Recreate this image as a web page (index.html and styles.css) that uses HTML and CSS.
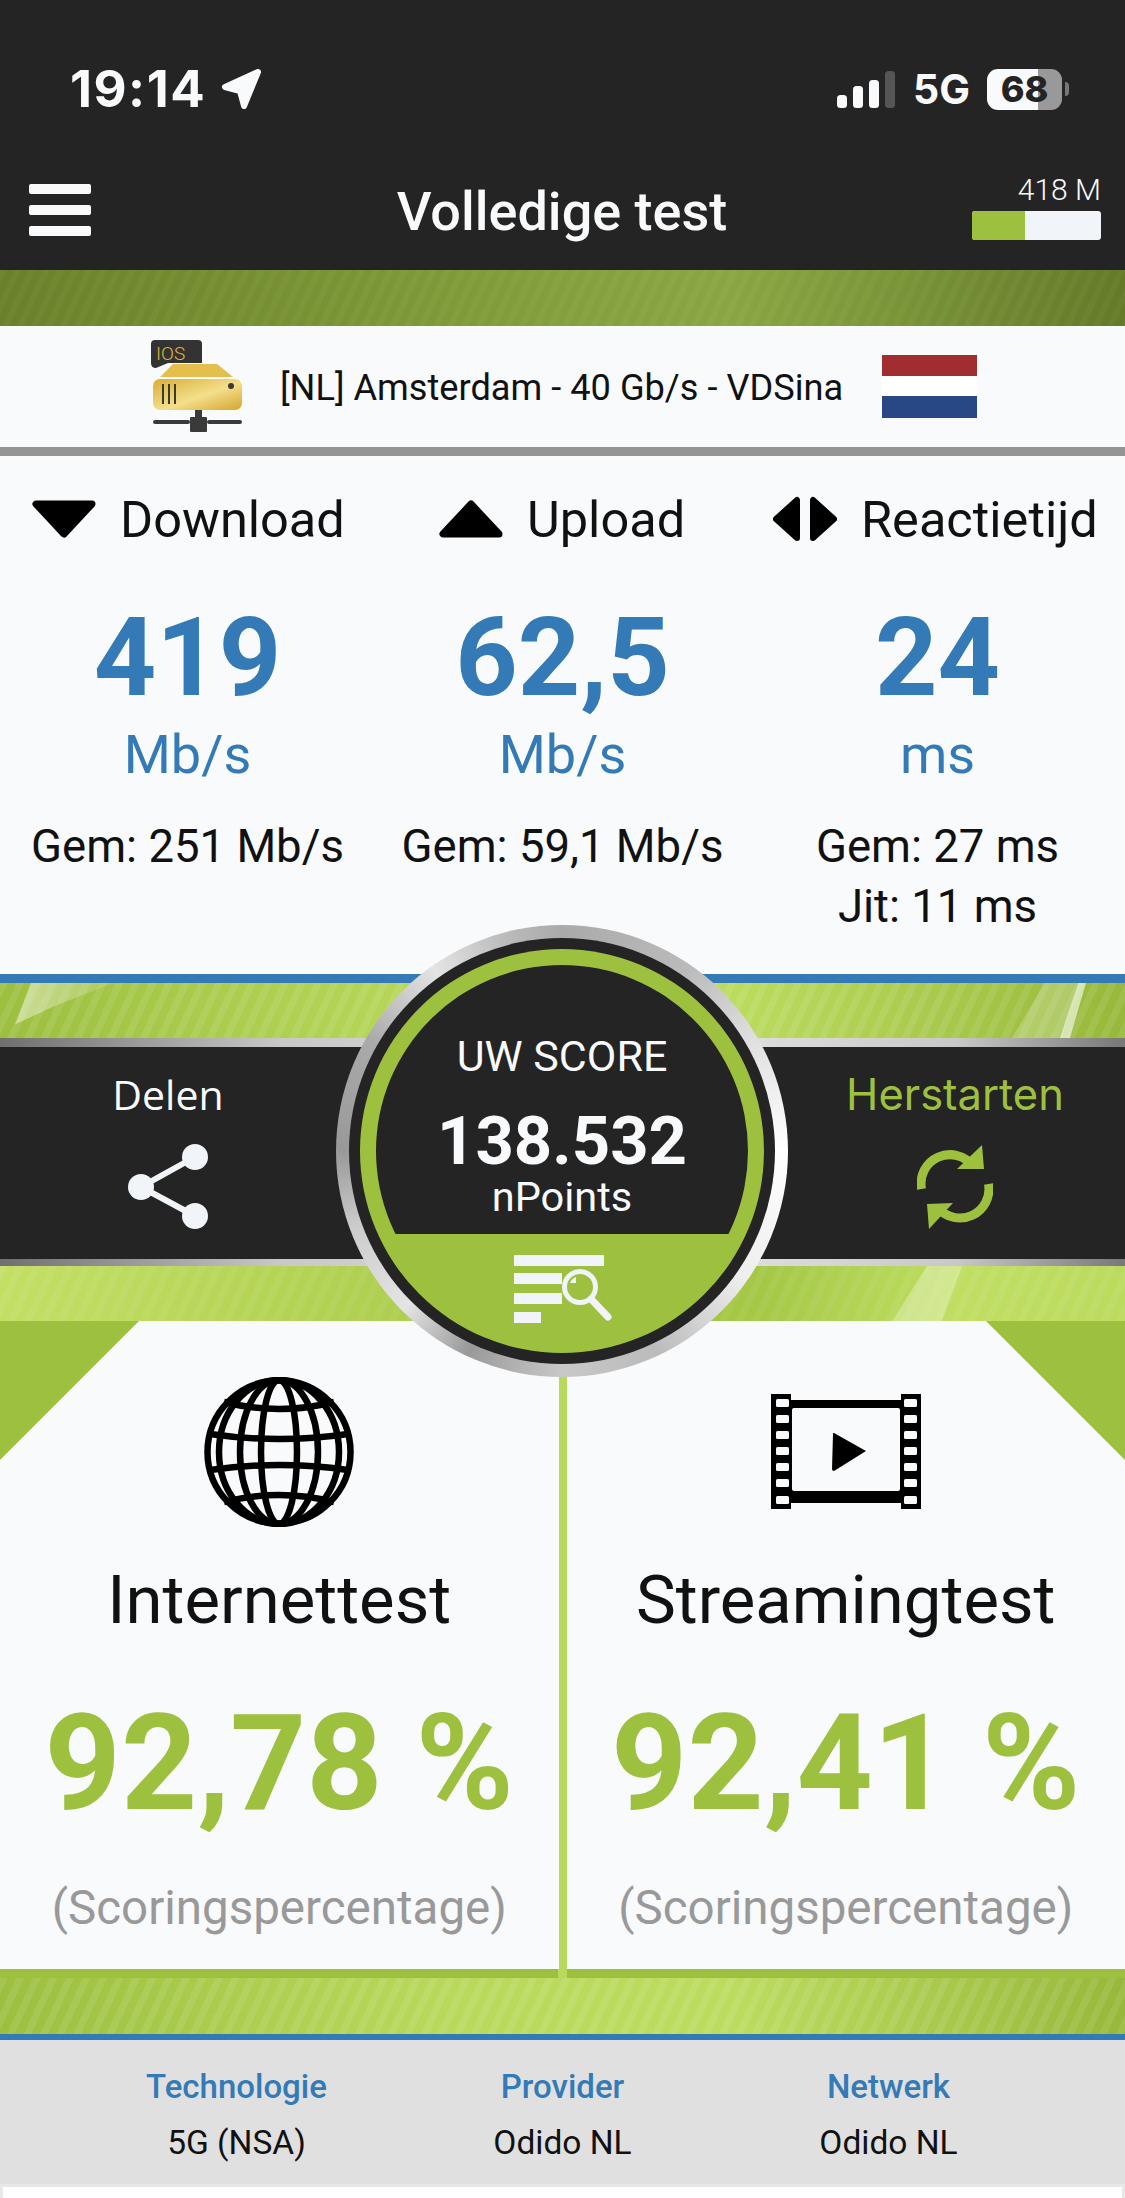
FILE: index.html
```html
<!DOCTYPE html>
<html lang="nl">
<head>
<meta charset="utf-8">
<title>Volledige test</title>
<link rel="stylesheet" href="styles.css">
</head>
<body>
<div class="page">
  <header class="header">
    <div class="status">
      <div class="status-left">
        <span class="time">19:14</span>
        <svg class="loc" viewBox="0 0 42 42"><path d="M37 4 L4 19 L19 23 L23 38 Z" fill="#f8fafc" stroke="#f8fafc" stroke-width="6" stroke-linejoin="round"/></svg>
      </div>
      <div class="status-right">
        <svg class="signal" viewBox="0 0 58 37"><rect x="0" y="24" width="10" height="13" rx="3.500" fill="#f8fafc"/><rect x="16" y="15" width="10" height="22" rx="3.500" fill="#f8fafc"/><rect x="32" y="9" width="10" height="28" rx="3.500" fill="#f8fafc"/><rect x="48" y="0" width="10" height="37" rx="3.500" fill="#555"/></svg>
        <span class="net">5G</span>
        <span class="batt"><span class="batt-num">68</span></span>
        <span class="batt-tip"></span>
      </div>
    </div>
    <div class="nav">
      <div class="nav-left"><div class="burger"><span></span><span></span><span></span></div></div>
      <h1 class="title">Volledige test</h1>
      <div class="quota">
        <span class="quota-text">418 M</span>
        <div class="quota-bar"><div class="quota-fill"></div></div>
      </div>
    </div>
  </header>
  <div class="band band-dark"></div>
  <div class="server">
    <svg class="server-icon" viewBox="0 0 93 93">
      <defs><linearGradient id="gold" x1="0" y1="0" x2="1" y2="1"><stop offset="0" stop-color="#d9ad35"/><stop offset=".55" stop-color="#f3df8c"/><stop offset="1" stop-color="#d5a52c"/></linearGradient></defs>
      <path d="M5 1 H48 Q52 1 52 5 V24 H18 L6 29 Q1 29 1 24 V5 Q1 1 5 1 Z" fill="#333"/>
      <text x="6" y="21" class="ios">IOS</text>
      <path d="M23 25 H67 L83 38 H10 Z" fill="#e5bf4c"/>
      <rect x="3" y="40" width="89" height="31" rx="7" fill="url(#gold)"/>
      <g fill="#3a3a30"><rect x="12" y="45" width="2" height="20"/><rect x="18" y="45" width="2" height="20"/><rect x="24" y="45" width="2" height="20"/><circle cx="81" cy="47" r="3"/></g>
      <g fill="#3a3a3a"><rect x="3" y="81" width="37" height="4" rx="2"/><rect x="57" y="81" width="35" height="4" rx="2"/><rect x="40" y="78" width="17" height="15" rx="1"/><rect x="45" y="71" width="7" height="8"/></g>
    </svg>
    <span class="server-name">[NL] Amsterdam - 40 Gb/s - VDSina</span>
    <div class="flag"><div class="flag-r"></div><div class="flag-w"></div><div class="flag-b"></div></div>
  </div>
  <div class="stats">
    <div class="stat-heads">
      <div class="head head-d"><svg class="head-icon" viewBox="0 0 64 38"><path d="M4 4 H60 L32 34 Z" stroke="#000" stroke-width="7" stroke-linejoin="round"/></svg><span>Download</span></div>
      <div class="head head-u"><svg class="head-icon" viewBox="0 0 64 38"><path d="M4 34 H60 L32 4 Z" stroke="#000" stroke-width="7" stroke-linejoin="round"/></svg><span>Upload</span></div>
      <div class="head head-r"><svg class="head-icon head-icon-r" viewBox="0 0 64 46"><path d="M24 4 V42 L3 23 Z" stroke="#000" stroke-width="6" stroke-linejoin="round"/><path d="M40 4 V42 L61 23 Z" stroke="#000" stroke-width="6" stroke-linejoin="round"/></svg><span>Reactietijd</span></div>
    </div>
    <div class="stat-cols">
      <div class="stat"><div class="num">419</div><div class="unit">Mb/s</div><div class="avg">Gem: 251 Mb/s</div></div>
      <div class="stat"><div class="num">62,5</div><div class="unit">Mb/s</div><div class="avg">Gem: 59,1 Mb/s</div></div>
      <div class="stat"><div class="num">24</div><div class="unit">ms</div><div class="avg">Gem: 27 ms</div><div class="avg avg-jit">Jit: 11 ms</div></div>
    </div>
  </div>
  <section class="score-zone">
    <div class="band band-light band-top"><div class="sheen sheen-a"></div><div class="sheen sheen-b"></div><div class="sheen sheen-s"></div></div>
    <div class="actions">
      <div class="action">
        <span class="action-label">Delen</span>
        <svg class="share" viewBox="0 0 82 86"><path d="M68 13 L14 43 L68 72" fill="none" stroke="#f1f5f9" stroke-width="6"/><circle cx="68" cy="13" r="13" fill="#f1f5f9"/><circle cx="14" cy="43" r="13" fill="#f1f5f9"/><circle cx="68" cy="72" r="13" fill="#f1f5f9"/></svg>
      </div>
      <div class="action action-go">
        <span class="action-label label-go">Herstarten</span>
        <svg class="refresh" viewBox="0 0 76 84"><path d="M4.500 44 A29 29 0 0 1 56 21" fill="none" stroke="#9dc13f" stroke-width="9"/><path d="M65 0 L67 24 L40 24 Z" fill="#9dc13f"/><path d="M71.500 39 A29 29 0 0 1 21 63" fill="none" stroke="#9dc13f" stroke-width="9"/><path d="M10 59 L36 58 L12 84 Z" fill="#9dc13f"/></svg>
      </div>
    </div>
    <div class="band band-light band-bottom"><div class="sheen sheen-c"></div></div>
    <div class="score">
      <div class="score-dark">
        <div class="score-top">
          <span class="score-label">UW SCORE</span>
          <span class="score-val">138.532</span>
          <span class="score-unit">nPoints</span>
          <svg class="score-icon" viewBox="0 0 98 68"><g fill="#f1f5f9"><rect x="0" y="0" width="90" height="11"/><rect x="0" y="18" width="48" height="11"/><rect x="0" y="38" width="48" height="11"/><rect x="0" y="57" width="27" height="11"/></g><circle cx="66" cy="32" r="15.500" fill="#9dc13f" stroke="#f1f5f9" stroke-width="5"/><path d="M66 21 A11 11 0 0 0 55 32 L66 32 Z" fill="#f1f5f9" transform="translate(-1 -1) scale(1)" opacity="0"/><path d="M62 22 A11 11 0 0 0 56 28 L62 28 Z" fill="#f1f5f9"/><path d="M77 44 L94 62" stroke="#f1f5f9" stroke-width="7" stroke-linecap="round"/></svg>
        </div>
      </div>
    </div>
  </section>
  <section class="tests">
    <div class="test test-l">
      <svg class="test-icon" viewBox="0 0 150 150"><g fill="none" stroke="#000" stroke-width="6.500"><circle cx="75" cy="75" r="71.500"/><ellipse cx="75" cy="75" rx="18" ry="72"/><ellipse cx="75" cy="75" rx="39" ry="72"/><ellipse cx="75" cy="75" rx="60" ry="72"/><path d="M20 25 Q75 39 130 25"/><path d="M6 57 Q75 67 144 57"/><path d="M6 93 Q75 83 144 93"/><path d="M20 125 Q75 111 130 125"/></g></svg>
      <div class="test-name">Internettest</div>
      <div class="test-val">92,78 %</div>
      <div class="test-sub">(Scoringspercentage)</div>
    </div>
    <div class="test test-r">
      <svg class="test-icon film" viewBox="0 0 150 115"><path d="M0 0 H20 V6 H130 V0 H150 V115 H130 V109 H20 V115 H0 Z" fill="#000"/><rect x="21" y="14" width="108" height="83" rx="2" fill="#f8fafc"/><g fill="#f8fafc"><rect x="5" y="5" width="13" height="8" rx="1.500"/><rect x="5" y="21" width="13" height="8" rx="1.500"/><rect x="5" y="37" width="13" height="8" rx="1.500"/><rect x="5" y="53" width="13" height="8" rx="1.500"/><rect x="5" y="69" width="13" height="8" rx="1.500"/><rect x="5" y="85" width="13" height="8" rx="1.500"/><rect x="5" y="102" width="13" height="8" rx="1.500"/><rect x="133" y="5" width="13" height="8" rx="1.500"/><rect x="133" y="21" width="13" height="8" rx="1.500"/><rect x="133" y="37" width="13" height="8" rx="1.500"/><rect x="133" y="53" width="13" height="8" rx="1.500"/><rect x="133" y="69" width="13" height="8" rx="1.500"/><rect x="133" y="85" width="13" height="8" rx="1.500"/><rect x="133" y="102" width="13" height="8" rx="1.500"/></g><path d="M62 40 Q61 39 63 39 L95 57 L63 77 Q61 77 61 75 Z" fill="#000"/></svg>
      <div class="test-name">Streamingtest</div>
      <div class="test-val">92,41 %</div>
      <div class="test-sub">(Scoringspercentage)</div>
    </div>
  </section>
  <div class="band band-light band-foot"></div>
  <footer class="info">
    <div class="info-col"><div class="info-key">Technologie</div><div class="info-val">5G (NSA)</div></div>
    <div class="info-col"><div class="info-key">Provider</div><div class="info-val">Odido NL</div></div>
    <div class="info-col"><div class="info-key">Netwerk</div><div class="info-val">Odido NL</div></div>
  </footer>
  <div class="below"></div>
</div>
</body>
</html>
```

FILE: styles.css
```css
* { box-sizing: border-box; margin: 0; padding: 0; }
html, body { background: #f8fafc; }
body { width: 1125px; height: 2198px; overflow: hidden; font-family: Roboto, "Liberation Sans", sans-serif; }
.page { width: 1125px; height: 2198px; display: flex; flex-direction: column; }

.header { height: 270px; background: #242424; color: #f8fafc; display: flex; flex-direction: column; }
.status { height: 176px; padding: 62px 56px 0 70px; display: flex; justify-content: space-between; align-items: flex-start; }
.status-left { display: flex; align-items: center; gap: 15px; height: 54px; }
.time { font-family: Inter, sans-serif; font-weight: 700; font-size: 51px; letter-spacing: 1.5px; line-height: 54px; }
.loc { width: 42px; height: 42px; }
.status-right { display: flex; align-items: center; height: 54px; }
.signal { width: 58px; height: 37px; margin-right: 18px; }
.net { font-family: Inter, sans-serif; font-weight: 700; font-size: 41px; margin-right: 17px; line-height: 1; }
.batt { width: 75px; height: 41px; border-radius: 11px; background: linear-gradient(90deg, #f8fafc 0, #f8fafc 68%, #999 68%); color: #242424; display: flex; align-items: center; justify-content: center; }
.batt-num { font-family: Inter, sans-serif; font-weight: 800; font-size: 36px; line-height: 1; }
.batt-tip { width: 4px; height: 14px; border-radius: 0 4px 4px 0; background: #777; margin-left: 3px; }

.nav { height: 94px; display: grid; grid-template-columns: 1fr auto 1fr; align-items: start; padding: 8px 24px 0 29px; }
.burger { width: 62px; height: 52px; display: flex; flex-direction: column; justify-content: space-between; }
.burger span { height: 10px; border-radius: 2px; background: #f8fafc; }
.title { text-align: center; font-weight: 500; font-size: 54px; line-height: 56px; color: #f8fafc; white-space: nowrap; margin-right: 6px; }
.quota { justify-self: end; width: 129px; display: flex; flex-direction: column; align-items: flex-end; gap: 8px; margin-top: -7px; }
.quota-text { font-size: 30px; font-weight: 300; line-height: 26px; white-space: nowrap; }
.quota-bar { width: 129px; height: 29px; border-radius: 3px; overflow: hidden; background: #f1f5f9; }
.quota-fill { width: 53px; height: 100%; background: #9dc13f; }

.band { position: relative; overflow: hidden; }
.band-dark { height: 56px; background: repeating-linear-gradient(115deg, rgba(255,255,255,.035) 0 6px, rgba(255,255,255,0) 6px 13px), linear-gradient(90deg, #6a8129 0%, #84a03c 50%, #8aa643 65%, #637a27 100%); }
.band-light { background: repeating-linear-gradient(115deg, rgba(255,255,255,.09) 0 7px, rgba(255,255,255,0) 7px 15px), linear-gradient(90deg, #9dbf3f 0%, #b9d95c 40%, #bcdc60 65%, #97b83b 100%); }

.server { height: 121px; display: flex; align-items: center; padding: 0 0 0 150px; }
.server-icon { width: 93px; height: 93px; margin-top: -2px; }
.ios { font-family: Roboto, sans-serif; font-size: 19px; font-weight: 300; fill: #e2b63f; }
.server-name { font-size: 36.200px; color: #111; margin-left: 37px; margin-top: 2px; white-space: nowrap; width: 602px; }
.flag { width: 95px; height: 63px; display: flex; flex-direction: column; }
.flag-r { height: 21px; background: #a12d31; }
.flag-w { height: 20px; background: #fff; }
.flag-b { height: 22px; background: #284785; }

.stats { height: 527px; border-top: 9px solid #949494; display: flex; flex-direction: column; }
.stat-heads { height: 101px; padding: 31px 25px 0 32px; display: flex; justify-content: flex-start; }
.head { display: flex; align-items: center; gap: 24px; height: 64px; font-size: 50.500px; color: #111; white-space: nowrap; }
.head-icon { width: 64px; height: 38px; fill: #000; flex: none; }
.head-icon-r { height: 46px; }
.head-d { width: 407px; }
.head-u { width: 334px; }
.stat-cols { display: grid; grid-template-columns: repeat(3, 375px); width: 1125px; padding-top: 47px; }
.stat { text-align: center; display: flex; flex-direction: column; align-items: center; }
.num { font-weight: 700; font-size: 109px; line-height: 108px; color: #337ab7; }
.unit { font-size: 54px; line-height: 60px; color: #337ab7; margin-top: 13px; }
.avg { font-size: 45.500px; line-height: 50px; color: #111; margin-top: 37px; white-space: nowrap; }
.avg-jit { margin-top: 10px; }

.score-zone { position: relative; height: 347px; border-top: 9px solid #337ab7; display: flex; flex-direction: column; z-index: 2; }
.band-top { height: 55px; }
.band-bottom { height: 55px; background: repeating-linear-gradient(115deg, rgba(255,255,255,.05) 0 7px, rgba(255,255,255,0) 7px 15px), linear-gradient(100deg, #c3e065 0%, #a3c544 55%, #a6c847 68%, #c0df62 85%, #bbdb5e 100%); }
.sheen { position: absolute; }
.sheen-a { left: 10px; top: 0; width: 104px; height: 55px; background: linear-gradient(100deg, rgba(255,255,255,.5), rgba(255,255,255,.05)); clip-path: polygon(20% 0, 100% 0, 45% 40%, 5% 75%, 0 100%); }
.sheen-b { left: 1012px; top: 0; width: 80px; height: 55px; background: rgba(255,255,255,.2); clip-path: polygon(41% 0, 82% 0, 62% 100%, 0 100%); }
.sheen-s { left: 1060px; top: 0; width: 26px; height: 55px; background: rgba(255,255,255,.6); clip-path: polygon(70% 0, 100% 0, 38% 100%, 0 100%); }
.sheen-c { left: 892px; top: 0; width: 70px; height: 55px; background: rgba(255,255,255,.3); clip-path: polygon(50% 0, 100% 0, 71% 100%, 0 100%); }
.actions { height: 228px; background: #242424; border-top: 9px solid; border-bottom: 7px solid; border-image: linear-gradient(90deg, #6f6f6f 0%, #c8c8c8 25%, #e5e5e5 60%, #c8c8c8 85%, #777 100%) 1; display: flex; justify-content: space-between; }
.action { width: 336px; display: flex; flex-direction: column; align-items: center; padding-top: 17px; color: #f8fafc; }
.action-go { width: 340px; }
.action-label { font-family: "Open Sans", sans-serif; font-size: 41px; line-height: 60px; }
.label-go { font-family: Inter, sans-serif; font-size: 43.500px; color: #9dc13f; }
.share { width: 82px; height: 86px; margin-top: 20px; }
.refresh { width: 76px; height: 84px; margin-top: 21px; }
.score { position: absolute; left: 336px; top: -58px; width: 452px; height: 452px; border-radius: 50%; background: conic-gradient(#aaa 0deg, #bbb 35deg, #e0e0e0 60deg, #fff 90deg, #eee 125deg, #bbb 155deg, #c8c8c8 180deg, #999 205deg, #e4e4e4 225deg, #ccc 250deg, #999 270deg, #aaa 300deg, #e4e4e4 325deg, #bbb 345deg, #aaa 360deg); padding: 13px; }
.score-dark { width: 426px; height: 426px; border-radius: 50%; background: #242424; padding: 11px; }
.score-top { position: relative; height: 404px; border-radius: 50%; background: #9dc13f; padding-top: 16px; overflow: hidden; display: flex; flex-direction: column; align-items: center; }
.score-top::before { content: ""; position: absolute; left: 16px; top: 16px; width: 372px; height: 372px; border-radius: 50%; background: linear-gradient(#242424 0 269px, #9dc13f 269px); }
.score-top > span { position: relative; color: #f8fafc; white-space: nowrap; }
.score-label { font-size: 43px; line-height: 50px; margin-top: 66px; }
.score-val { font-weight: 700; font-size: 67px; line-height: 60px; margin-top: 30px; }
.score-unit { font-size: 41.500px; line-height: 44px; margin-top: 4px; }
.score-icon { position: absolute; left: 154px; top: 306px; width: 98px; height: 68px; }

.tests { height: 657px; background: #f8fafc; display: grid; grid-template-columns: 1fr 1fr; border-bottom: 9px solid #9dc13f; position: relative; }
.tests::after { content: ""; position: absolute; left: 558px; bottom: -9px; width: 9px; height: 9px; background: #b9d95c; }
.test { position: relative; display: flex; flex-direction: column; align-items: center; padding-top: 56px; }
.test-l { border-right: 4px solid #b9d95c; }
.test-r { border-left: 4px solid #b9d95c; }
.test-l::before, .test-r::before { content: ""; position: absolute; top: 0; width: 139px; height: 139px; background: #9dc13f; }
.test-l::before { left: 0; clip-path: polygon(0 0, 100% 0, 0 100%); }
.test-r::before { right: 0; clip-path: polygon(0 0, 100% 0, 100% 100%); }
.test-icon { width: 150px; height: 150px; }
.film { height: 115px; margin-top: 17px; margin-bottom: 18px; }
.test-name { font-size: 67px; line-height: 76px; margin-top: 35px; color: #111; }
.test-val { font-weight: 700; font-size: 133px; line-height: 140px; margin-top: 56px; color: #9dc13f; white-space: nowrap; }
.test-sub { font-size: 47.500px; line-height: 56px; margin-top: 46px; color: #999; white-space: nowrap; }

.band-foot { height: 56px; }
.info { height: 150px; border-top: 6px solid #337ab7; background: #e0e0e0; display: grid; grid-template-columns: 326px 326px 326px; justify-content: center; }
.info-col { text-align: center; padding-top: 27px; }
.info-key { font-size: 33px; font-weight: 500; line-height: 40px; color: #337ab7; }
.info-val { font-size: 33.500px; line-height: 40px; margin-top: 16px; color: #111; }
.below { flex: 1; background: #fff; border: solid #e8e8e8; border-width: 3px 3px 0; }
```
